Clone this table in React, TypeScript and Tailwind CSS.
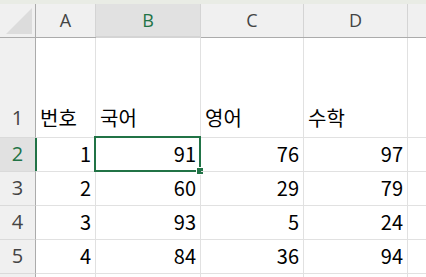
const COLS = ['A', 'B', 'C', 'D', ''];

const HEAD = ['번호', '국어', '영어', '수학'];

const ROWS: number[][] = [
    [1, 91, 76, 97],
    [2, 60, 29, 79],
    [3, 93, 5, 24],
    [4, 84, 36, 94],
];

const GRID = 'grid grid-cols-[36px_60px_105px_103px_104px_1fr]';
const CELL_FONT = "font-['Noto_Sans_CJK_KR',sans-serif] text-[20px] leading-[24px] text-black";

export default function App() {
    return (
        <div className="w-[426px] h-[277px] overflow-hidden bg-white select-none">
            {/* ribbon edge */}
            <div className="h-[4px] bg-[#e9ece5]" />

            {/* column headers */}
            <div className={`${GRID} h-[34px] bg-[#f0f0f0] border-b border-[#ababab]`}>
                <div className="relative border-r border-[#ababab]">
                    <svg className="absolute left-[6px] top-[4px]" width="27" height="27" viewBox="0 0 27 27">
                        <polygon points="26,0 26,26 0,26" fill="#dcdcdc" />
                    </svg>
                </div>
                {COLS.map((c, i) => (
                    <div
                        key={i}
                        className={`flex items-center justify-center font-['Open_Sans',sans-serif] text-[18px] ${
                            c === 'B'
                                ? 'bg-[#e1e1e1] text-[#217346] border-b-2 border-[#217346] -mb-px'
                                : 'text-[#444]'
                        } ${i < 4 ? 'border-r border-[#d4d4d4]' : ''}`}
                    >
                        {c}
                    </div>
                ))}
            </div>

            {/* row 1 - tall header row */}
            <div className={`${GRID} h-[100px]`}>
                <div className="flex items-end justify-center pb-[7px] bg-[#f0f0f0] border-r border-b border-r-[#ababab] border-b-[#dadada] font-['Open_Sans',sans-serif] text-[20px] leading-[24px] text-[#444]">
                    1
                </div>
                {HEAD.map((h, i) => (
                    <div
                        key={i}
                        className={`flex items-end pl-[4px] pb-[7px] border-r border-b border-[#e1e1e1] ${CELL_FONT} ${
                            i === 1 ? 'border-b-[#217346]' : ''
                        }`}
                    >
                        {h}
                    </div>
                ))}
                <div className="border-b border-[#e1e1e1]" />
            </div>

            {/* data rows */}
            {ROWS.map((row, r) => {
                const active = r === 0;
                return (
                    <div key={r} className={`${GRID} h-[34px] ${active ? 'relative z-10' : ''}`}>
                        <div
                            className={`flex items-end justify-center pb-[5px] border-b border-b-[#dadada] font-['Open_Sans',sans-serif] text-[20px] leading-[24px] ${
                                active
                                    ? 'bg-[#e1e1e1] text-[#217346] border-r-2 border-r-[#217346] -mr-px'
                                    : 'bg-[#f0f0f0] text-[#444] border-r border-r-[#ababab]'
                            }`}
                        >
                            {r + 2}
                        </div>
                        {row.map((v, c) => (
                            <div
                                key={c}
                                className={`relative flex items-end justify-end pr-[4px] pb-[5px] border-r border-b border-[#e1e1e1] ${CELL_FONT}`}
                            >
                                {v}
                                {active && c === 1 && (
                                    <>
                                        <div className="absolute -left-[2px] -top-[2px] -right-[1px] -bottom-[1px] border-2 border-[#217346]" />
                                        <div className="absolute -right-[4px] -bottom-[4px] w-[8px] h-[8px] bg-[#217346] border border-white" />
                                    </>
                                )}
                            </div>
                        ))}
                        <div className="border-b border-[#e1e1e1]" />
                    </div>
                );
            })}

            {/* partial row 6 */}
            <div className={`${GRID} h-[34px]`}>
                <div className="bg-[#f0f0f0] border-r border-[#ababab]" />
                <div className="border-r border-[#e1e1e1]" />
                <div className="border-r border-[#e1e1e1]" />
                <div className="border-r border-[#e1e1e1]" />
                <div className="border-r border-[#e1e1e1]" />
                <div />
            </div>
        </div>
    );
}
